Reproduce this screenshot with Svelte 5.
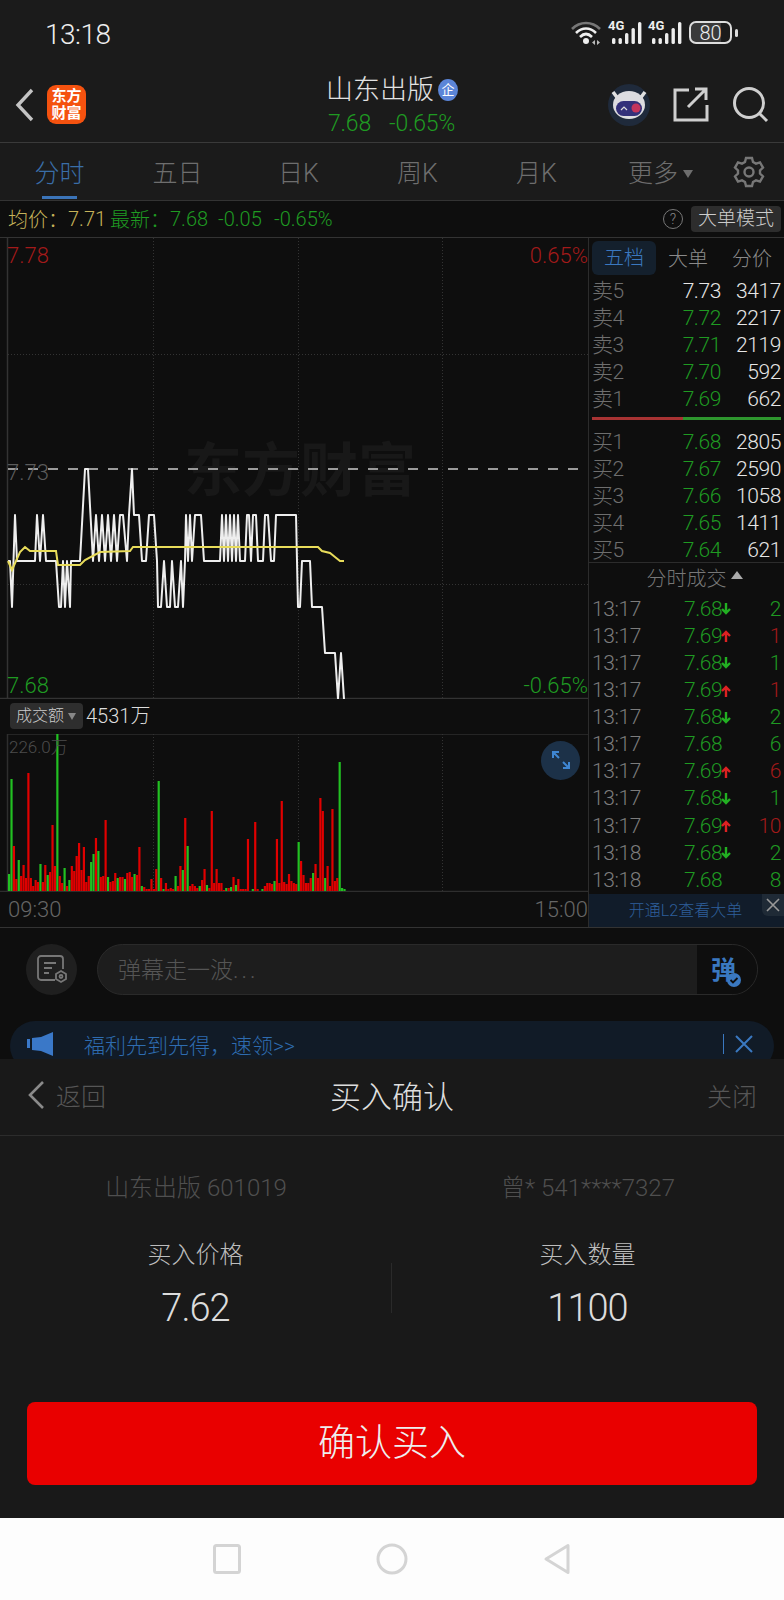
<script>
	const tabs = ["五日", "日K", "周K", "月K"];
	const sell = [
		["卖5", "7.73", "3417", "w"],
		["卖4", "7.72", "2217", "g"],
		["卖3", "7.71", "2119", "g"],
		["卖2", "7.70", "592", "g"],
		["卖1", "7.69", "662", "g"],
	];
	const buy = [
		["买1", "7.68", "2805"],
		["买2", "7.67", "2590"],
		["买3", "7.66", "1058"],
		["买4", "7.65", "1411"],
		["买5", "7.64", "621"],
	];
	// time, price, arrow, volume, volume colour
	const ticks = [
		["13:17", "7.68", "d", "2", "g"],
		["13:17", "7.69", "u", "1", "r"],
		["13:17", "7.68", "d", "1", "g"],
		["13:17", "7.69", "u", "1", "r"],
		["13:17", "7.68", "d", "2", "g"],
		["13:17", "7.68", "", "6", "g"],
		["13:17", "7.69", "u", "6", "r"],
		["13:17", "7.68", "d", "1", "g"],
		["13:17", "7.69", "u", "10", "r"],
		["13:18", "7.68", "d", "2", "g"],
		["13:18", "7.68", "", "8", "g"],
	];

	const priceLine =
		"8,561 10,561 12,607 15,515 17,561 35,561 37,515 40,561 43,515 46,561 56,561 59,607 61,607 63,561 65,607 67,561 70,607 71,561 80,561 85,469 88,469 93,561 96,515 99,561 102,515 105,561 108,515 111,561 114,515 117,561 120,515 123,515 127,561 129,515 132,469 134,515 139,515 142,561 146,561 149,515 154,515 157,561 158,607 161,607 164,561 167,607 170,607 172,561 175,607 178,607 181,561 183,607 185,561 186,515 188,561 190,515 192,561 195,515 201,515 204,561 220,561 222,515 224,561 226,515 228,561 230,515 232,561 234,515 236,561 238,515 240,561 245,561 247,515 249,515 251,561 253,515 256,515 258,561 263,561 265,515 268,515 271,561 274,561 276,515 296,515 297,561 298,607 300,607 302,561 310,561 312,607 322,607 325,653 335,653 338,699 341,653 344,699";
	const avgLine =
		"8,561 12,570 20,552 25,547 30,551 56,551 58,565 80,565 85,560 100,552 130,551 133,547 318,547 322,551 330,553 335,557 340,561 344,561";

	// positive is red, negative green, pixels tall
	const volumes = [
		-17, -112, 45, 12, -31, 15, 26, 13, 118, 13, 5, 11, 9, -27, 9, 26, -16, 19, 66, 25, -157, 15, 8, -23, 5, -11, 25, 20, 35, 48, 21, 44, 9, 15, -29, -37, 53, -40, 14, 15, 71, -14, 9, 10, 18, -13, 14, 14, -12, 18, 19, 14, -17, 16, 44, -5, 4, 2, 2, 12, 2, 22, -110, 13, -2, 8, 2, 3, 2, -15, 5, 25, -21, 73, -45, 5, 7, 5, 3, -5, 11, 22, -6, 3, 80, 8, 22, 8, 8, 1, -3, 3, -4, 14, -6, 12, 2, 2, 2, 52, 0, -2, 69, 2, 0, -2, 5, 8, 8, 7, -10, 52, 8, 90, 9, 7, 17, 10, 8, 7, -49, 30, 16, 8, 8, 13, -18, 27, 13, 93, 80, -13, 25, 5, 82, 10, 13, -129, -3, -2,
	];
</script>

<div class="phone">
	<div class="status">
		<span class="clock">13:18</span>
		<div class="status-icons">
			<svg width="32" height="26" viewBox="0 0 32 26" fill="none">
				<path d="M2 9C10 1 22 1 30 9" stroke="#777" stroke-width="2.6" />
				<path d="M6 13C12 7 20 7 26 13" stroke="#eee" stroke-width="2.6" />
				<path d="M10 17C14 13 18 13 22 17" stroke="#eee" stroke-width="2.6" />
				<circle cx="16" cy="21" r="3" fill="#eee" />
				<path d="M25 20v5l-3-2.5zM27 20v5l3-2.5z" fill="#bbb" />
			</svg>
			{#each [0, 1] as s}
				<div class="signal">
					<span class="net">4G</span>
					<svg width="34" height="24" viewBox="0 0 34 24" fill="#eee">
						<rect x="4" y="17" width="3.400" height="6" rx="1.500" />
						<rect x="10.500" y="17" width="3.400" height="6" rx="1.500" />
						<rect x="17" y="12" width="3.400" height="11" rx="1.500" />
						<rect x="23.500" y="7" width="3.400" height="16" rx="1.500" />
						<rect x="30" y="1" width="3.400" height="22" rx="1.500" />
					</svg>
				</div>
			{/each}
			<div class="battery"><span>80</span></div>
			<i class="nib"></i>
		</div>
	</div>

	<header class="topbar">
		<svg class="back" width="20" height="34" viewBox="0 0 20 34" fill="none">
			<path d="M17 2L3 17l14 15" stroke="#c4c4c4" stroke-width="3.4" />
		</svg>
		<div class="logo"><span>东方</span><span>财富</span></div>
		<div class="title">
			<div class="name">山东出版<b>企</b></div>
			<div class="quote"><span>7.68</span><span>-0.65%</span></div>
		</div>
		<div class="robot">
			<svg width="42" height="42" viewBox="0 0 42 42">
				<circle cx="21" cy="21" r="21" fill="#1f2a3b" />
				<path d="M5 8l6 8M37 8l-6 8" stroke="#e0e0e0" stroke-width="3.500" />
				<ellipse cx="21" cy="21" rx="16" ry="14" fill="#dcdce0" />
				<rect x="8" y="17" width="26" height="15" rx="7.500" fill="#33307a" />
				<circle cx="28" cy="24" r="4.500" fill="#c3345c" />
				<path d="M13 26l3-3 3 3" stroke="#ddd" stroke-width="1.200" fill="none" />
			</svg>
		</div>
		<svg class="share" width="36" height="36" viewBox="0 0 36 36" fill="none">
			<path d="M16 4H2v30h32V19" stroke="#cfcfcf" stroke-width="3" />
			<path d="M15 21L33 3M22 3h11v11" stroke="#cfcfcf" stroke-width="3" />
		</svg>
		<svg class="search" width="38" height="38" viewBox="0 0 38 38" fill="none">
			<circle cx="17" cy="17" r="14.500" stroke="#cfcfcf" stroke-width="3" />
			<path d="M27 27l8 8" stroke="#cfcfcf" stroke-width="3" />
		</svg>
	</header>

	<nav class="tabs">
		<div class="tab active">分时<i></i></div>
		{#each tabs as t}
			<div class="tab">{t}</div>
		{/each}
		<div class="tab">更多<em></em></div>
		<svg class="gear" width="32" height="32" viewBox="0 0 32 32" fill="none" stroke="#777" stroke-width="2.4">
			<path d="M13 2h6l1 4 3 1.600 4-1.200 3 5.200-3 2.900v3l3 2.900-3 5.200-4-1.200-3 1.600-1 4h-6l-1-4-3-1.600-4 1.200-3-5.200 3-2.900v-3l-3-2.900 3-5.200 4 1.200 3-1.600z" />
			<circle cx="16" cy="16" r="4.500" />
		</svg>
	</nav>

	<div class="infobar">
		<span class="yellow l1">均价&#65306;</span>
		<span class="yellow l2">7.71</span>
		<span class="green l3">最新&#65306;</span>
		<span class="green l4">7.68</span>
		<span class="green l5">-0.05</span>
		<span class="green l6">-0.65%</span>
		<span class="help">?</span>
		<span class="mode">大单模式</span>
	</div>

	<section class="market">
		<div class="left">
			<div class="pricechart">
				<span class="watermark">东方财富</span>
				<svg width="588" height="461" viewBox="0 238 588 461">
					<path d="M7.500 238V699M0 698.500H588" stroke="#333" stroke-width="1.500" fill="none" />
					<path d="M153.500 238V699M298.500 238V699M442.500 238V699M8 354.500H588M8 584.500H588" stroke="#333" stroke-dasharray="1 2" fill="none" />
					<path d="M8 469H588" stroke="#9a9a9a" stroke-width="2" stroke-dasharray="10 10" fill="none" />
					<polyline points={priceLine} stroke="#eee" stroke-width="2" fill="none" stroke-linejoin="round" />
					<polyline points={avgLine} stroke="#e8dc5a" stroke-width="2" fill="none" />
				</svg>
				<span class="axis tl red">7.78</span>
				<span class="axis ml grey">7.73</span>
				<span class="axis bl green">7.68</span>
				<span class="axis tr red">0.65%</span>
				<span class="axis br green">-0.65%</span>
			</div>
			<div class="volhead">
				<span class="volbtn">成交额<em></em></span>
				<span class="volsum">4531万</span>
			</div>
			<div class="volchart">
				<svg width="588" height="158" viewBox="0 735 588 158">
					<path d="M7.500 735H588M7.500 735V892M0 892.500H588" stroke="#2e2e2e" stroke-width="1.500" fill="none" />
					<path d="M153.500 735V892M298.500 735V892M442.500 735V892" stroke="#333" stroke-dasharray="1 2" fill="none" />
					{#each volumes as v, i}
						<rect x={8 + i * 2.413} y={892 - Math.abs(v)} width="2.200" height={Math.abs(v)} fill={v > 0 ? "#e00000" : "#22c022"} />
					{/each}
				</svg>
				<span class="maxvol">226.0万</span>
				<span class="expand">
					<svg width="20" height="20" viewBox="0 0 20 20" fill="none" stroke="#3f86d2" stroke-width="2">
						<path d="M2 8V2h6M2 2l6 6M18 12v6h-6M18 18l-6-6" />
					</svg>
				</span>
			</div>
			<div class="times"><span>09:30</span><span>15:00</span></div>
		</div>

		<aside class="right">
			<div class="rtabs">
				<span class="on">五档</span>
				<span>大单</span>
				<span>分价</span>
			</div>
			{#each sell as r}
				<div class="row">
					<span class="lab">{r[0]}</span>
					<span class="pr" class:green={r[3] === "g"}>{r[1]}</span>
					<span class="qty">{r[2]}</span>
				</div>
			{/each}
			<div class="split"><i></i><i></i></div>
			{#each buy as r}
				<div class="row">
					<span class="lab">{r[0]}</span>
					<span class="pr green">{r[1]}</span>
					<span class="qty">{r[2]}</span>
				</div>
			{/each}
			<div class="tickhead">分时成交<em></em></div>
			{#each ticks as t}
				<div class="row tick">
					<span class="lab">{t[0]}</span>
					<span class="pr green">{t[1]}</span>
					<span class="arr">
						{#if t[2] === "d"}
							<svg width="10" height="12" viewBox="0 0 10 12" fill="none" stroke="#22b022" stroke-width="2.400"><path d="M5 0v10M1 6l4 4 4-4" /></svg>
						{:else if t[2] === "u"}
							<svg width="10" height="12" viewBox="0 0 10 12" fill="none" stroke="#dd2222" stroke-width="2.400"><path d="M5 12V2M1 6l4-4 4 4" /></svg>
						{/if}
					</span>
					<span class="qty" class:green={t[4] === "g"} class:red={t[4] === "r"}>{t[3]}</span>
				</div>
			{/each}
			<div class="l2bar">
				开通L2查看大单
				<span class="l2close">
					<svg width="14" height="14" viewBox="0 0 14 14" stroke="#999" stroke-width="1.600"><path d="M1 1l12 12M13 1L1 13" /></svg>
				</span>
			</div>
		</aside>
	</section>

	<section class="social">
		<div class="danmu">
			<span class="setting">
				<svg width="32" height="30" viewBox="0 0 32 30" fill="none" stroke="#777" stroke-width="1.800">
					<path d="M19 26H5a3 3 0 0 1-3-3V5a3 3 0 0 1 3-3h19a3 3 0 0 1 3 3v10" />
					<path d="M8 9h12M8 14h8M8 19h5" />
					<path d="M25 17l5 3v5l-5 3-5-3v-5z" />
					<circle cx="25" cy="22.500" r="1.500" />
				</svg>
			</span>
			<div class="input">
				<span class="ph">弹幕走一波<span class="dots">...</span></span>
				<span class="send">弹<svg width="14" height="14" viewBox="0 0 14 14"><circle cx="7" cy="7" r="7" fill="#3a78c0" /><path d="M3.500 7l2.500 2.500 4.500-4.500" stroke="#0e0e0e" stroke-width="1.800" fill="none" /></svg></span>
			</div>
		</div>
		<div class="promo">
			<svg width="28" height="24" viewBox="0 0 28 24" fill="#3a78c8">
				<path d="M0 7h3v9H0zM5 6l9-1 12-5v24l-12-5-9-1z" />
			</svg>
			<span class="promotext">福利先到先得&#65292;速领&gt;&gt;</span>
			<span class="promoclose">
				<svg width="20" height="20" viewBox="0 0 20 20" stroke="#3a78c0" stroke-width="2"><path d="M2 2l16 16M18 2L2 18" /></svg>
			</span>
		</div>
	</section>

	<section class="sheet">
		<div class="sheethead">
			<div class="ret">
				<svg width="18" height="30" viewBox="0 0 18 30" fill="none"><path d="M16 2L3 15l13 13" stroke="#8a8a8a" stroke-width="2.600" /></svg>
				返回
			</div>
			<div class="sheettitle">买入确认</div>
			<div class="close">关闭</div>
		</div>
		<div class="account">
			<span>山东出版 601019</span>
			<span>曾* 541****7327</span>
		</div>
		<div class="order">
			<div class="cell">
				<div class="k">买入价格</div>
				<div class="v">7.62</div>
			</div>
			<i class="sep"></i>
			<div class="cell">
				<div class="k">买入数量</div>
				<div class="v">1100</div>
			</div>
		</div>
		<div class="confirm">确认买入</div>
	</section>

	<footer class="navbar">
		<svg width="28" height="30" viewBox="0 0 28 30" fill="none"><rect x="1.500" y="1.500" width="25" height="27" rx="2" stroke="#d4d4d4" stroke-width="3" /></svg>
		<svg width="32" height="32" viewBox="0 0 32 32" fill="none"><circle cx="16" cy="16" r="14" stroke="#d4d4d4" stroke-width="3" /></svg>
		<svg width="28" height="32" viewBox="0 0 28 32" fill="none"><path d="M25 2.500v27L3 16z" stroke="#d4d4d4" stroke-width="3" stroke-linejoin="round" /></svg>
	</footer>
</div>

<style>
:global(body){
	margin:0;
	background:#0e0e0e;
}

.phone{
	width:784px;
	height:1600px;
	overflow:hidden;
	display:flex;
	flex-direction:column;
	font-family:Roboto,"Noto Sans CJK SC",sans-serif;
	font-weight:300;
	background:#0e0e0e;
}

.green{ color:#1f9a22; }
.red{ color:#a31a1a; }
.grey{ color:#5c5c5c; }
.yellow{ color:#c6b35a; }

.status{
	height:66px;
	background:#1b1b1b;
	display:flex;
	align-items:center;
	justify-content:space-between;
	padding:0 46px 0 45px;
	box-sizing:border-box;
}
.clock{
	font-size:28px;
	letter-spacing:-.5px;
	color:#eee;
	margin-top:3px;
}
.status-icons{
	display:flex;
	align-items:center;
}
.signal{
	position:relative;
	margin-left:6px;
	width:34px;
	height:24px;
}
.signal + .signal{ margin-left:6px; }
.signal svg{ display:block; }
.net{
	position:absolute;
	left:0;
	top:-2px;
	font-size:13px;
	line-height:14px;
	font-weight:700;
	color:#eee;
}
.battery{
	margin-left:7px;
	width:43px;
	height:23px;
	box-sizing:border-box;
	border:2px solid #ddd;
	border-radius:7px;
	display:flex;
	align-items:center;
	justify-content:center;
	background:linear-gradient(90deg,#3a3a3a 78%,#1b1b1b 78%);
	color:#eee;
	font-size:20px;
}
.nib{
	width:3px;
	height:8px;
	margin-left:3px;
	border-radius:2px;
	background:#ddd;
}

.topbar{
	height:77px;
	background:#1b1b1b;
	border-bottom:1px solid #3a3a3a;
	box-sizing:border-box;
	display:flex;
	align-items:center;
	padding-left:15px;
}
.back{ flex:none; margin-top:2px; }
.logo{
	flex:none;
	width:39px;
	height:39px;
	margin:2px 0 0 12px;
	border-radius:9px;
	background:#f5520f;
	color:#fff;
	font-size:15px;
	font-weight:700;
	line-height:17px;
	display:flex;
	flex-direction:column;
	align-items:center;
	justify-content:center;
}
.title{
	width:132px;
	margin:9px 0 0 240px;
	align-self:flex-start;
	flex:none;
}
.name{
	font-size:27px;
	line-height:30px;
	color:#e2e2e2;
	display:flex;
	align-items:center;
	white-space:nowrap;
}
.name b{
	width:22px;
	height:22px;
	margin-left:4px;
	border-radius:50%;
	background:#5b85d8;
	color:#fff;
	font-size:13px;
	line-height:22px;
	text-align:center;
}
.quote{
	font-size:23px;
	line-height:30px;
	color:#1f9a22;
	margin:4px 0 0 2px;
	display:flex;
	gap:18px;
	white-space:nowrap;
	letter-spacing:-.2px;
}
.robot{
	flex:none;
	margin:2px 0 0 150px;
	height:42px;
}
.share{ flex:none; margin:1px 0 0 23px; }
.search{ flex:none; margin:2px 0 0 23px; }

.tabs{
	height:58px;
	background:#1b1b1b;
	border-bottom:1px solid #333;
	box-sizing:border-box;
	display:flex;
	align-items:center;
	position:relative;
	padding-left:0;
}
.tab{
	width:119px;
	flex:none;
	text-align:center;
	font-size:25px;
	color:#6e6e6e;
	position:relative;
}
.tab:first-child{ color:#3a6ea8; }
.tab i{
	position:absolute;
	left:42px;
	width:35px;
	bottom:-10px;
	height:3px;
	background:#3b74b8;
}
.tab em{
	display:inline-block;
	margin-left:5px;
	vertical-align:4px;
	border:5px solid transparent;
	border-top:8px solid #6e6e6e;
	border-bottom:0;
}
.tabs .tab:nth-child(2){ margin-left:-1px; }
.tabs .tab:nth-child(3){ margin-left:2px; }
.tabs .tab:nth-child(6){ margin-left:5px; }
.gear{
	position:absolute;
	left:733px;
	top:13px;
}

.infobar{
	height:37px;
	background:#0e0e0e;
	display:flex;
	align-items:center;
	font-size:20px;
	border-bottom:1px solid #333;
	box-sizing:border-box;
	white-space:nowrap;
}
.l1{ margin-left:8px; width:60px; }
.l2{ width:42px; }
.l3{ width:60px; }
.l4{ width:48px; }
.l5{ width:56px; }
.l6{ width:383px; }
.help{
	width:18px;
	height:18px;
	border:1px solid #777;
	border-radius:50%;
	font-size:14px;
	line-height:18px;
	text-align:center;
	color:#888;
	margin-left:6px;
}
.mode{
	margin-left:8px;
	width:90px;
	height:26px;
	line-height:26px;
	text-align:center;
	font-size:19px;
	background:#2d2d2d;
	border-radius:4px;
	color:#ccc;
}

.market{
	display:flex;
	height:689px;
	background:#0e0e0e;
	border-bottom:1px solid #333;
}
.left{
	width:588px;
	flex:none;
}
.pricechart{
	position:relative;
	height:461px;
}
.pricechart svg, .volchart svg{
	display:block;
	position:relative;
}
.watermark{
	position:absolute;
	left:184px;
	top:203px;
	font-size:58px;
	line-height:60px;
	font-weight:700;
	color:#181818;
	white-space:nowrap;
}
.axis{
	position:absolute;
	font-size:22px;
	line-height:26px;
}
.tl{ left:7px; top:5px; }
.ml{ left:7px; top:222px; }
.bl{ left:7px; top:435px; }
.tr{ right:0; top:5px; }
.br{ right:0; top:435px; }

.volhead{
	height:35px;
	display:flex;
	align-items:center;
}
.volbtn{
	margin-left:10px;
	width:73px;
	height:26px;
	line-height:26px;
	background:#2e2e2e;
	border-radius:4px;
	font-size:16px;
	color:#ccc;
	box-sizing:border-box;
	padding-left:6px;
	white-space:nowrap;
}
.volbtn em{
	display:inline-block;
	margin-left:4px;
	vertical-align:1px;
	border:4px solid transparent;
	border-top:7px solid #888;
	border-bottom:0;
}
.volsum{
	margin:-3px 0 0 3px;
	font-size:20px;
	color:#ddd;
}
.volchart{
	position:relative;
	height:158px;
}
.maxvol{
	position:absolute;
	left:9px;
	top:2px;
	font-size:17px;
	line-height:22px;
	color:#4c4c4c;
}
.expand{
	position:absolute;
	left:541px;
	top:7px;
	width:39px;
	height:39px;
	border-radius:50%;
	background:#1c3148;
	display:flex;
	align-items:center;
	justify-content:center;
}
.times{
	height:35px;
	display:flex;
	align-items:center;
	justify-content:space-between;
	padding-left:8px;
	font-size:22px;
	color:#666;
}

.right{
	width:196px;
	flex:none;
	border-left:1px solid #2c2c2c;
	box-sizing:border-box;
	display:flex;
	flex-direction:column;
	padding-top:3px;
}
.rtabs{
	height:34px;
	display:flex;
	align-items:center;
	font-size:20px;
	color:#8a8a8a;
	margin-bottom:3px;
}
.rtabs span{
	margin-left:12px;
	width:37px;
	white-space:nowrap;
}
.rtabs span:nth-child(3){ margin-left:27px; }
.rtabs .on{
	margin-left:3px;
	width:64px;
	height:34px;
	line-height:34px;
	text-align:center;
	border-radius:6px;
	background:#14202d;
	color:#3a78c0;
}
.row{
	height:27px;
	flex:none;
	display:flex;
	align-items:center;
	padding:0 3px;
	font-size:21px;
	line-height:27px;
	color:#e6e6e6;
	letter-spacing:-.4px;
}
.lab{
	color:#6e6e6e;
	width:61px;
	white-space:nowrap;
}
.pr{
	width:68px;
	text-align:right;
}
.pr.green{ color:#1f9a22; }
.qty{
	flex:1;
	text-align:right;
}
.split{
	display:flex;
	height:3px;
	margin:4px 3px 9px 3px;
	flex:none;
}
.split i:first-child{ width:91px; background:#a83333; }
.split i:last-child{ flex:1; background:#2e962e; }
.tickhead{
	height:30px;
	flex:none;
	margin-top:-2px;
	border-top:1px solid #2c2c2c;
	box-sizing:border-box;
	display:flex;
	align-items:center;
	justify-content:center;
	font-size:20px;
	color:#777;
	padding-left:16px;
	padding-bottom:0;
	margin-bottom:4px;
}
.tickhead em{
	margin-left:4px;
	margin-bottom:4px;
	border:6px solid transparent;
	border-bottom:8px solid #aaa;
	border-top:0;
}
.row.tick{ height:27.1px; }
.tick .lab{ width:92px; color:#7c7c7c; }
.tick .pr{ width:36px; }
.arr{
	width:11px;
	display:flex;
	justify-content:flex-end;
}
.tick .qty.green{ color:#1f9a22; }
.tick .qty.red{ color:#a31a1a; }
.l2bar{
	position:relative;
	flex:1;
	background:#111c2a;
	color:#2e5f9a;
	font-size:16px;
	line-height:33px;
	text-align:center;
	padding-right:2px;
}
.l2close{
	position:absolute;
	right:0;
	top:0;
	width:22px;
	height:22px;
	background:#1f2a36;
	border-bottom-left-radius:6px;
	display:flex;
	align-items:center;
	justify-content:center;
}

.social{
	height:131px;
	background:#0e0e0e;
	overflow:hidden;
}
.danmu{
	display:flex;
	align-items:center;
	padding:16px 26px 0 26px;
}
.setting{
	width:51px;
	height:51px;
	border-radius:50%;
	background:#1f1f1f;
	flex:none;
	display:flex;
	align-items:center;
	justify-content:center;
}
.input{
	margin-left:20px;
	flex:1;
	height:51px;
	box-sizing:border-box;
	border:1px solid #2a2a2a;
	border-radius:26px;
	background:#1d1d1d;
	display:flex;
	align-items:center;
	overflow:hidden;
}
.ph{
	flex:1;
	padding:0 0 2px 20px;
	font-size:23px;
	color:#555;
}
.dots{ letter-spacing:3px; }
.send{
	width:60px;
	height:100%;
	background:#0e0e0e;
	color:#3a78c0;
	font-size:25px;
	font-weight:700;
	display:flex;
	align-items:center;
	position:relative;
	padding:0 0 3px 14px;
	box-sizing:border-box;
}
.send svg{
	position:absolute;
	left:30px;
	top:28px;
}
.promo{
	margin:26px 10px 0 10px;
	height:50px;
	border-radius:25px;
	background:#111b27;
	display:flex;
	align-items:center;
	padding:0 0 4px 17px;
	box-sizing:border-box;
}
.promotext{
	margin-left:29px;
	flex:1;
	font-size:21px;
	color:#2e6cb0;
}
.promoclose{
	border-left:1px solid #3a78c0;
	height:20px;
	padding-left:10px;
	margin-right:20px;
	display:flex;
	align-items:center;
}

.sheet{
	height:460px;
	background:#191919;
	display:flex;
	flex-direction:column;
}
.sheethead{
	height:77px;
	flex:none;
	border-bottom:1px solid #2c2c2c;
	box-sizing:border-box;
	display:flex;
	align-items:center;
	justify-content:space-between;
	padding:0 27px 4px;
	position:relative;
	font-size:25px;
	color:#565656;
}
.ret{
	display:flex;
	align-items:center;
	gap:11px;
}
.sheettitle{
	position:absolute;
	left:0;
	right:0;
	text-align:center;
	font-size:31px;
	color:#dedede;
}
.account{
	display:grid;
	grid-template-columns:392px 392px;
	justify-items:center;
	font-size:24px;
	color:#4f4f4f;
	padding-top:34px;
	line-height:36px;
}
.order{
	display:flex;
	align-items:center;
	margin-top:32px;
}
.cell{
	width:391px;
	text-align:center;
}
.sep{
	width:1px;
	height:50px;
	background:#2a2a2a;
	margin-top:8px;
}
.k{
	font-size:24px;
	line-height:34px;
	color:#bdbdbd;
}
.v{
	font-size:38px;
	line-height:46px;
	margin-top:13px;
	color:#dcdcdc;
	letter-spacing:-1px;
}
.confirm{
	margin:71px 27px 0 27px;
	height:83px;
	line-height:83px;
	border-radius:8px;
	background:#e90000;
	text-align:center;
	font-size:37px;
	color:#eee;
}

.navbar{
	height:82px;
	background:#fdfdfd;
	display:flex;
	align-items:center;
	justify-content:center;
	gap:135px;
}
</style>
